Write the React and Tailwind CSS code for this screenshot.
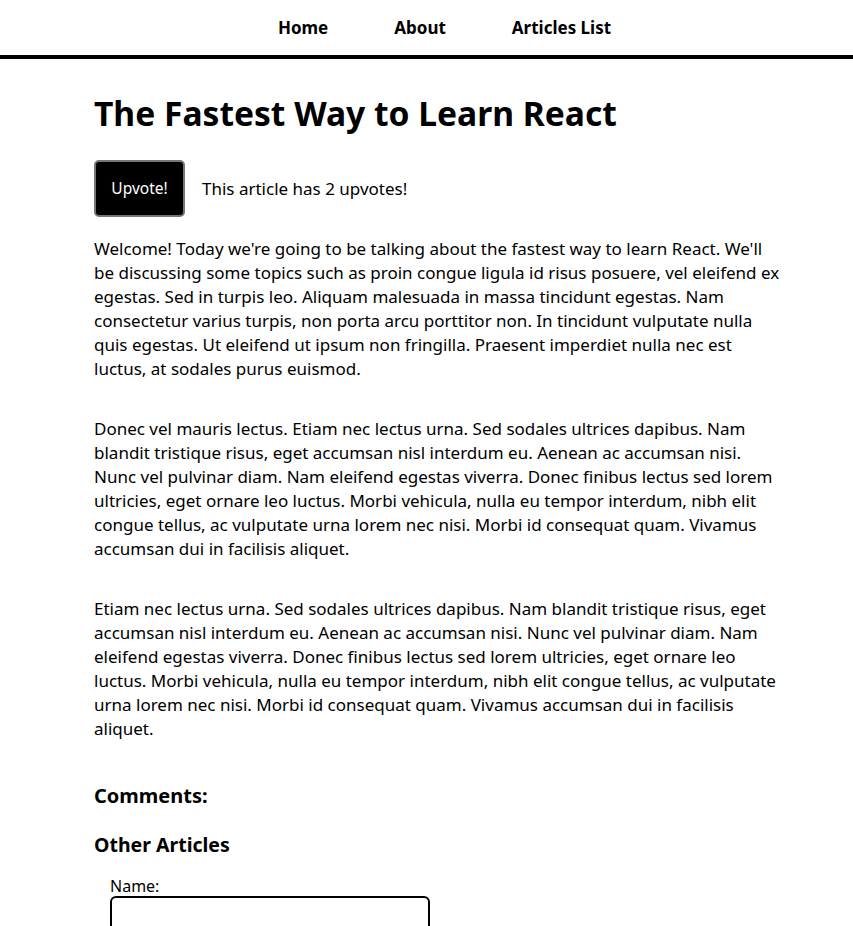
export default function App() {
  return (
    <div className="bg-white text-black font-['Noto_Sans',sans-serif]">
      <nav className="border-b-4 border-black h-[59px]">
        <ul className="flex justify-center gap-[66px] pt-[16px] pl-[36px]">
          <li className="text-[17px] font-bold leading-[24px]">Home</li>
          <li className="text-[17px] font-bold leading-[24px]">About</li>
          <li className="text-[17px] font-bold leading-[24px]">Articles List</li>
        </ul>
      </nav>
      <div className="ml-[94px] w-[690px]">
        <h1 className="text-[33.6px] font-bold leading-[44px] mt-[32px]">The Fastest Way to Learn React</h1>
        <div className="flex items-center mt-[25px]">
          <button className="w-[91px] h-[57px] bg-black text-white text-[15.5px] rounded-[5px] border-2 border-[#767676]">Upvote!</button>
          <p className="ml-[17px] text-[17px] leading-[24px]">This article has 2 upvotes!</p>
        </div>
        <div className="mt-[20px] text-[17px] leading-[24px] space-y-[36px]">
          <p>Welcome! Today we're going to be talking about the fastest way to learn React. We'll be discussing some topics such as proin congue ligula id risus posuere, vel eleifend ex egestas. Sed in turpis leo. Aliquam malesuada in massa tincidunt egestas. Nam consectetur varius turpis, non porta arcu porttitor non. In tincidunt vulputate nulla quis egestas. Ut eleifend ut ipsum non fringilla. Praesent imperdiet nulla nec est luctus, at sodales purus euismod.</p>
          <p>Donec vel mauris lectus. Etiam nec lectus urna. Sed sodales ultrices dapibus. Nam blandit tristique risus, eget accumsan nisl interdum eu. Aenean ac accumsan nisi. Nunc vel pulvinar diam. Nam eleifend egestas viverra. Donec finibus lectus sed lorem ultricies, eget ornare leo luctus. Morbi vehicula, nulla eu tempor interdum, nibh elit congue tellus, ac vulputate urna lorem nec nisi. Morbi id consequat quam. Vivamus accumsan dui in facilisis aliquet.</p>
          <p>Etiam nec lectus urna. Sed sodales ultrices dapibus. Nam blandit tristique risus, eget accumsan nisl interdum eu. Aenean ac accumsan nisi. Nunc vel pulvinar diam. Nam eleifend egestas viverra. Donec finibus lectus sed lorem ultricies, eget ornare leo luctus. Morbi vehicula, nulla eu tempor interdum, nibh elit congue tellus, ac vulputate urna lorem nec nisi. Morbi id consequat quam. Vivamus accumsan dui in facilisis aliquet.</p>
        </div>
        <h3 className="mt-[42px] text-[20px] font-bold leading-[26px]">Comments:</h3>
        <h3 className="mt-[22px] text-[19.5px] font-bold leading-[28px]">Other Articles</h3>
        <div className="ml-[16px] mt-[17px]">
          <label className="block text-[16px] leading-[20px]">Name:</label>
          <input className="block w-[320px] h-[44px] border-2 border-black rounded-[6px]" />
        </div>
      </div>
    </div>
  );
}
